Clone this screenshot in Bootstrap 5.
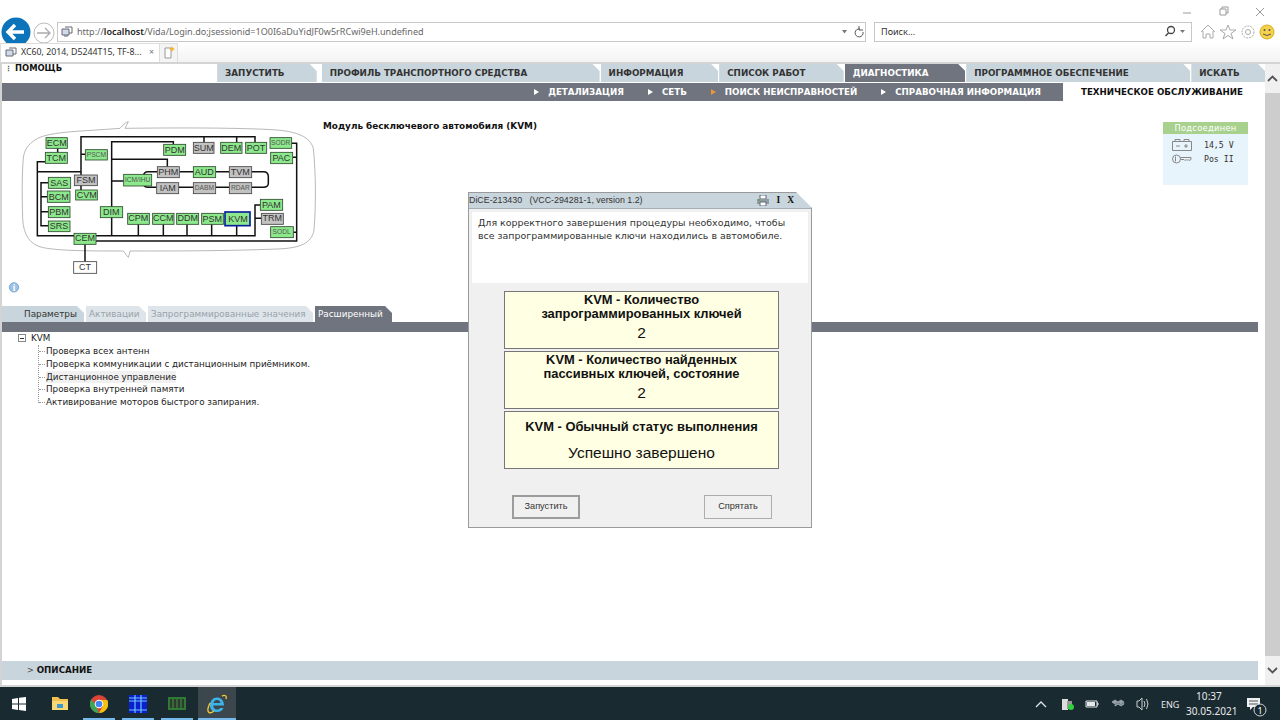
<!DOCTYPE html>
<html lang="ru"><head><meta charset="utf-8"><title>VIDA</title>
<link href="https://cdn.jsdelivr.net/npm/bootstrap@5.3.0/dist/css/bootstrap.min.css" rel="stylesheet">
<style>
html,body{margin:0;height:720px;overflow:hidden;background:#fff}
.vw{width:1280px;height:720px;position:relative;font-family:"DejaVu Sans",sans-serif;color:#222}
.chrome{height:62px;background:#fff;font-family:"Noto Sans",sans-serif}
.win-row{height:21px}
.nav-row{height:21px;padding:0 0 0 1px}
.back-svg{margin-top:-4px;margin-bottom:-7px;flex:none}
.addr{height:20px;border:1px solid #c8c8c8;font-size:9.05px;color:#666;background:#fff;white-space:nowrap}
.addr b{color:#222;font-weight:600}
.addr-main{width:809px;padding:0 0 0 3px}
.addr-fav{margin-right:4px}
.addr-search{width:318px;margin-left:8px;padding:0 3px 0 6px;color:#333}
.tab-row{height:20px;background:linear-gradient(#fff,#f3f3f3)}
.ie-tab{width:160px;height:19px;border:1px solid #ddd;border-bottom:0;background:#fff;font-size:8.8px;padding:0 5px 0 4px;color:#333;white-space:nowrap}
.ie-new{width:18px;height:19px;border:1px solid #ddd;border-left:0;border-bottom:0;background:#f4f4f4}
.app{height:625px;border-top:2px solid #d4d4d4;border-left:2px solid #d4d4d4;border-bottom:2px solid #d4d4d4}
.mainpane{width:1263px}
.topbar{height:19px;background:#fff}
.help{width:216px;font-size:8.4px;font-weight:700;color:#111;line-height:9px;padding-left:3px}
.dots{font-size:7px;margin-right:3px;color:#555}
.mtab{background:#c9d5dc;height:18px;line-height:19px;font-size:8.75px;font-weight:700;color:#333;padding-left:8px;white-space:nowrap;clip-path:polygon(0 0,calc(100% - 7px) 0,100% 7px,100% 100%,0 100%);margin-right:1px}
.mtab-on{background:#6f747e;color:#fff}
.w1{width:100px}.w2{width:279px}.w3{width:118px}.w4{width:125px}.w5{width:121px}.w6{width:225px}.w7{width:74px;margin-right:0}
.subbar{height:18px;background:#6f747e}
.subitems{font-size:8.7px;font-weight:700;color:#fff;line-height:18px;white-space:nowrap}
.subitem{margin-right:24px}
.subitem:last-child{margin-right:22px}
.tri{display:inline-block;width:0;height:0;border-left:5px solid #fff;border-top:3.5px solid transparent;border-bottom:3.5px solid transparent;margin-right:9px}
.tri-o{border-left-color:#e8963c}
.subactive{width:202px;background:#fff;color:#111;font-weight:700;font-size:8.7px;line-height:18px;white-space:nowrap;padding-left:18px}
.topcontent{height:205px}
.diagram{width:310px;height:180px;margin:14px 0 0 8px;flex:none;overflow:visible}
.modtitle{font-size:8.9px;font-weight:700;color:#111;margin:19px 0 0 3px;width:840px;flex:none}
.connbox{width:85px;height:63px;margin:21px 0 0 0;background:#e8f4fb;flex:none}
.connhead{height:12px;line-height:12px;background:#a9d18e;color:#fff;text-align:center;font-size:8.3px;letter-spacing:.3px}
.connrow{height:14px;padding-left:9px;line-height:14px;color:#333;font-family:"DejaVu Sans Mono",monospace;font-size:8.2px}
.connrow span{margin-left:12px}
.stabs{height:16px}
.stab{height:16px;line-height:17px;font-size:8.85px;color:#9aa2a8;background:#dde5ea;padding-left:3px;white-space:nowrap;clip-path:polygon(0 0,calc(100% - 7px) 0,100% 7px,100% 100%,0 100%);margin-right:2px}
.s1{width:82px;padding-left:22px;color:#333;background:#c9d5dc}.s2{width:60px}.s3{width:165px}.s4{width:77px;background:#6f747e;color:#fff;margin-right:0}
.graybar{height:10px;background:#6f747e;width:1256px}
.treebox{font-size:8.77px;color:#222;padding:0 0 0 16px;flex:1}
.troot{height:13px;line-height:13px}
.pm{display:inline-block;width:8px;height:8px;border:1px solid #888;position:relative;vertical-align:-1px;margin-right:5px}
.pm::after{content:"";position:absolute;left:1px;right:1px;top:2.5px;height:1px;background:#333}
.tlist{margin:0 0 0 20px;padding:0;list-style:none;border-left:1px dotted #999;height:58px}
.tlist li{line-height:12.75px;height:12.75px;padding-left:7px;position:relative;white-space:nowrap}
.tlist li::before{content:"";position:absolute;left:0;top:6px;width:6px;border-top:1px dotted #999}
.thl{background:#f1f1f1;display:inline-block}
.descbar{height:19px;background:#c9d5dc;width:1256px;font-size:8.7px;font-weight:700;color:#111;line-height:18px;padding-left:25px;margin-bottom:5px}
.descbar i{font-style:normal;font-weight:400;color:#444;font-size:8px;margin-right:3px}
.sbar{width:15px;background:#f0f0f0}
.sarrow{height:29px}
.sthumb{flex:1;background:#cdcdcd}
.taskbar{height:33px;background:#1a2a31;color:#e6e9ea;font-family:"Noto Sans",sans-serif;position:relative}
.tb{width:38px;height:33px;position:relative}
.mg1{margin-left:1px}.mg2{margin-left:2px}.mg3{margin-left:3px}
.tb-run::after{content:"";position:absolute;left:3px;right:3px;bottom:0;height:2px;background:#76b9ed}
.tb-on{background:#3b474d}
.tb-on::after{left:0;right:0}
.clock{font-size:10.1px;line-height:15px;text-align:center;width:46px;margin-right:11px}
.notif{margin-right:4px}
.dlg{position:absolute;left:468px;top:192px;width:344px;height:336px;background:#f0f0f0;border:1px solid #9a9a9a;clip-path:polygon(0 0,calc(100% - 16px) 0,100% 16px,100% 100%,0 100%);font-family:"Liberation Sans",sans-serif}
.dlg-title{height:16px;background:#c9d5dc;font-size:8.85px;line-height:13px;color:#333;white-space:nowrap;border-bottom:1px solid #a5b0b6}
.dlg-tool{font-family:"Liberation Serif",serif;font-weight:700;font-size:9.5px;color:#111;margin-right:17px;gap:7px}
.dlg-msg{height:71px;margin:3px 3px 0;background:#fff;font-family:"DejaVu Sans",sans-serif;font-size:9.45px;line-height:13px;padding:4px 6px;color:#333}
.res{width:275px;height:58px;background:#ffffe3;border:1px solid #777;margin-left:35px;margin-bottom:2px;padding-top:1px;text-align:center;color:#111;font-size:12.9px;line-height:14px;font-weight:700}
.res-first{margin-top:8px}
.resn{font-weight:400;font-size:15.5px;line-height:20px;margin-top:2px}
.res-title3{margin-top:7px}
.resn3{margin-top:9px}
.vbtn{width:68px;height:24px;background:#f0f0f0;border:1px solid #adadad;font-size:9.2px;color:#333;display:flex;align-items:center;justify-content:center}
.vbtn-f{border:2px solid #9c9c9c}
.btnrow{padding:24px 39px 0 43px}
</style></head><body>
<div class="vw d-flex flex-column">
 <div class="chrome">
  <div class="win-row d-flex justify-content-end align-items-center">
   <svg width="100" height="21" viewBox="0 0 100 21"><path d="M3 13h8" stroke="#999" fill="none"/><path d="M40 9h6v6h-6zM42 9V7h6v6h-2" stroke="#999" fill="none"/><path d="M76 8l8 8M84 8l-8 8" stroke="#999" fill="none"/></svg>
  </div>
  <div class="nav-row d-flex align-items-center">
   <svg width="56" height="32" viewBox="0 0 56 32" class="back-svg"><circle cx="15" cy="15" r="14.500" fill="#0e74b9"/><path d="M7 15h16M14 8l-7 7 7 7" stroke="#fff" stroke-width="3.400" fill="none"/><circle cx="43" cy="16" r="10" fill="#fff" stroke="#bbb"/><path d="M36 16h13M44 11l5 5-5 5" stroke="#aaa" stroke-width="1.300" fill="none"/></svg>
   <div class="addr addr-main d-flex align-items-center">
    <svg width="12" height="12" viewBox="0 0 12 12" class="addr-fav"><path d="M1 3h7v6H1z" fill="#cfdbe6" stroke="#667"/><path d="M4 1h7v6H8" fill="none" stroke="#667"/><path d="M3 10h4" stroke="#667"/></svg>
    <span>http://<b>localhost</b>/Vida/Login.do;jsessionid=1O0I6aDuYidJF0w5rRCwi9eH.undefined</span>
    <svg width="24" height="12" viewBox="0 0 24 12" class="ms-auto"><path d="M1 4h5L3.500 7.500z" fill="#777"/><path d="M19 3a4 4 0 1 0 3 3M18 0v4h4" stroke="#555" fill="none"/></svg>
   </div>
   <div class="addr addr-search d-flex align-items-center"><span>Поиск...</span>
    <svg width="24" height="13" viewBox="0 0 24 13" class="ms-auto"><circle cx="7" cy="5" r="3.500" fill="none" stroke="#444" stroke-width="1.300"/><path d="M4.500 8l-3 3" stroke="#444" stroke-width="1.500"/><path d="M16 5h5l-2.500 3z" fill="#777"/></svg>
   </div>
   <svg width="88" height="20" viewBox="0 0 88 20"><path d="M9 10l7-7 7 7M11 9v7h3v-4h4v4h3V9" fill="none" stroke="#aaa"/><path d="M36 3l2 5h6l-5 3.500 2 5.500-5-3.500-5 3.500 2-5.500-5-3.500h6z" fill="none" stroke="#aaa"/><circle cx="56" cy="10" r="6" fill="none" stroke="#aaa" stroke-dasharray="2 1"/><circle cx="56" cy="10" r="2.500" fill="none" stroke="#aaa"/><circle cx="75" cy="10" r="7" fill="#f4d24b" stroke="#d9ab20"/><circle cx="72.500" cy="8" r="1" fill="#555"/><circle cx="77.500" cy="8" r="1" fill="#555"/><path d="M71 12q4 3 8 0" fill="none" stroke="#555"/></svg>
  </div>
  <div class="tab-row d-flex align-items-end">
   <div class="ie-tab d-flex align-items-center"><svg width="12" height="12" viewBox="0 0 12 12" class="me-1"><path d="M1 3h7v6H1z" fill="#cfdbe6" stroke="#667"/><path d="M4 1h7v6H8" fill="none" stroke="#667"/></svg><span>XC60, 2014, D5244T15, TF-8...</span><span class="ms-auto text-secondary">×</span></div>
   <div class="ie-new d-flex align-items-center justify-content-center"><svg width="12" height="14" viewBox="0 0 12 14"><path d="M2 2h6v10H2z" fill="#fff" stroke="#999"/><path d="M9 0l1 2 2 1-2 1-1 2-1-2-2-1 2-1z" fill="#f0b429"/></svg></div>
  </div>
 </div>

 <div class="app d-flex">
  <div class="mainpane d-flex flex-column">
   <div class="topbar d-flex">
    <div class="help"><span class="dots">⋮</span>ПОМОЩЬ</div>
    <div class="mtab w1">ЗАПУСТИТЬ</div><div class="mtab w2 ms-1">ПРОФИЛЬ ТРАНСПОРТНОГО СРЕДСТВА</div><div class="mtab w3">ИНФОРМАЦИЯ</div><div class="mtab w4">СПИСОК РАБОТ</div><div class="mtab mtab-on w5">ДИАГНОСТИКА</div><div class="mtab w6">ПРОГРАММНОЕ ОБЕСПЕЧЕНИЕ</div><div class="mtab w7">ИСКАТЬ</div>
   </div>
   <div class="subbar d-flex">
    <div class="subitems flex-grow-1 d-flex justify-content-end">
     <span class="subitem"><i class="tri"></i>ДЕТАЛИЗАЦИЯ</span><span class="subitem"><i class="tri"></i>СЕТЬ</span><span class="subitem"><i class="tri tri-o"></i>ПОИСК НЕИСПРАВНОСТЕЙ</span><span class="subitem"><i class="tri"></i>СПРАВОЧНАЯ ИНФОРМАЦИЯ</span>
    </div>
    <div class="subactive">ТЕХНИЧЕСКОЕ ОБСЛУЖИВАНИЕ</div>
   </div>
   <div class="topcontent d-flex">
    <svg class="diagram" viewBox="0 0 930 540" font-family="Liberation Sans, sans-serif" text-anchor="middle">
     <path d="M75 75C110 50 200 50 330 40C340 30 345 22 355 20L345 40C500 38 700 38 800 45C860 50 900 65 910 100C918 180 918 270 912 345C905 385 870 400 800 402C650 408 500 408 360 408C358 415 358 422 355 427C348 420 345 414 340 408C250 408 150 408 100 398C60 390 40 360 38 310C36 240 36 170 40 130C42 105 55 88 75 75Z" fill="none" stroke="#888" stroke-width="1.800"/>
     <g fill="none" stroke="#111" stroke-width="4.500">
      <path d="M143 100V112M106 140H82V362H735V270H751M82 170H213V65H735V82M582 65V82M680 65V82M213 118H226M213 170V225"/>
      <path d="M305 362V80H490V88M305 133H472V155M305 198H341"/>
      <path d="M115 203H93V332H115M93 245H112M93 290H115"/>
      <path d="M225 388V440M258 378H860V85H845M848 127H860M850 352H860M735 310H754"/>
      <path d="M385 328V362M460 328V362M531 328V362M605 328V362M680 332V362"/>
      <path d="M442 170H415Q400 170 400 185V205Q400 217 415 217H440M508 170H550M617 170H658M725 170H760Q775 170 775 185V205Q775 217 760 217H725M506 217H550M617 217H658"/>
     </g>
     <g stroke="#2e4a2e" stroke-width="2.500" fill="#8be88b">
      <rect x="108" y="68" width="64" height="32"/><rect x="106" y="112" width="66" height="33"/><rect x="226" y="104" width="66" height="31"/><rect x="115" y="187" width="67" height="33"/><rect x="112" y="228" width="68" height="34"/><rect x="115" y="275" width="65" height="33"/><rect x="115" y="318" width="65" height="32"/><rect x="197" y="225" width="65" height="30"/><rect x="271" y="275" width="67" height="33"/><rect x="192" y="355" width="66" height="33"/><rect x="461" y="88" width="66" height="33"/><rect x="632" y="82" width="64" height="33"/><rect x="707" y="82" width="63" height="33"/><rect x="780" y="68" width="65" height="32"/><rect x="782" y="112" width="66" height="34"/><rect x="341" y="178" width="84" height="35"/><rect x="550" y="155" width="67" height="33"/><rect x="353" y="295" width="65" height="33"/><rect x="428" y="295" width="64" height="33"/><rect x="500" y="295" width="66" height="33"/><rect x="575" y="295" width="65" height="33"/><rect x="751" y="253" width="67" height="33"/><rect x="782" y="335" width="68" height="33"/>
     </g>
     <rect x="645" y="291" width="75" height="41" fill="#8be88b" stroke="#0a1f9c" stroke-width="5"/>
     <g stroke="#444" stroke-width="2.500" fill="#c2c2c2">
      <rect x="193" y="180" width="69" height="32"/><rect x="550" y="82" width="62" height="33"/><rect x="442" y="155" width="66" height="33"/><rect x="658" y="155" width="67" height="33"/><rect x="440" y="203" width="66" height="33"/><rect x="550" y="203" width="67" height="33"/><rect x="658" y="203" width="67" height="33"/><rect x="754" y="295" width="66" height="33"/>
     </g>
     <rect x="191" y="440" width="69" height="35" fill="#fff" stroke="#444" stroke-width="2.500"/>
     <g font-size="27" fill="#333">
      <text x="140" y="93">ECM</text><text x="139" y="137">TCM</text><text x="148" y="212">SAS</text><text x="146" y="254">BCM</text><text x="147" y="300">PBM</text><text x="147" y="342">SRS</text><text x="228" y="204">FSM</text><text x="230" y="249">CVM</text><text x="304" y="300">DIM</text><text x="225" y="379">CEM</text><text x="225" y="465">CT</text><text x="494" y="113">PDM</text><text x="581" y="107">SUM</text><text x="664" y="107">DEM</text><text x="738" y="107">POT</text><text x="814" y="137">PAC</text><text x="475" y="179">PHM</text><text x="583" y="179">AUD</text><text x="691" y="179">TVM</text><text x="473" y="227">IAM</text><text x="385" y="319">CPM</text><text x="460" y="319">CCM</text><text x="533" y="319">DDM</text><text x="607" y="320">PSM</text><text x="684" y="320">KVM</text><text x="784" y="278">PAM</text><text x="787" y="319">TRM</text>
     </g>
     <g font-size="20" fill="#555">
      <text x="259" y="125">PSCM</text><text x="812" y="90">SODR</text><text x="383" y="201">ICM/IHU</text><text x="583" y="224">DABM</text><text x="691" y="224">RDAR</text><text x="815" y="358">SODL</text>
     </g>
     <circle cx="12" cy="517" r="14" fill="#9cc3e6" stroke="#5a8fc0" stroke-width="2"/>
     <text x="12" y="527" font-size="28" font-weight="700" fill="#fff" font-family="Liberation Serif, serif">i</text>
    </svg>
    <div class="modtitle">Модуль бесключевого автомобиля (KVM)</div>
    <div class="connbox">
     <div class="connhead">Подсоединен</div>
     <div class="connrow d-flex align-items-center mt-1"><svg width="20" height="12" viewBox="0 0 20 12"><path d="M.5 2.500h19v9H.5zM3 2.500V.5h5v2M12 2.500V.5h5v2" fill="none" stroke="#888"/><path d="M4 7h4M12 7h4M14 5v4" stroke="#888" fill="none"/></svg><span>14,5 V</span></div>
     <div class="connrow d-flex align-items-center"><svg width="20" height="12" viewBox="0 0 20 12"><circle cx="4.500" cy="6" r="4" fill="none" stroke="#888"/><path d="M3.500 3.500v5M8.500 4.500H19v2l-2 1-1-1-1 1-1-1-1 1-1-1H8.500" fill="none" stroke="#888"/></svg><span>Pos II</span></div>
    </div>
   </div>
   <div class="stabs d-flex">
    <div class="stab s1">Параметры</div><div class="stab s2">Активации</div><div class="stab s3">Запрограммированные значения</div><div class="stab s4">Расширенный</div>
   </div>
   <div class="graybar"></div>
   <div class="treebox">
    <div class="troot"><span class="pm"></span>KVM</div>
    <ul class="tlist">
     <li>Проверка всех антенн</li>
     <li>Проверка коммуникации с дистанционным приёмником.</li>
     <li><span class="thl">Дистанционное управление</span></li>
     <li>Проверка внутренней памяти</li>
     <li>Активирование моторов быстрого запирания.</li>
    </ul>
   </div>
   <div class="descbar"><i>&gt;</i>ОПИСАНИЕ</div>
  </div>
  <div class="sbar d-flex flex-column">
   <div class="sarrow d-flex align-items-center justify-content-center"><svg width="11" height="7" viewBox="0 0 11 7"><path d="M1 6l4.500-4.500L10 6" fill="none" stroke="#555" stroke-width="1.800"/></svg></div>
   <div class="sthumb"></div>
   <div class="sarrow d-flex align-items-center justify-content-center"><svg width="11" height="7" viewBox="0 0 11 7"><path d="M1 1l4.500 4.500L10 1" fill="none" stroke="#555" stroke-width="1.800"/></svg></div>
  </div>
 </div>

 <div class="taskbar d-flex align-items-center">
  <div class="tb d-flex align-items-center justify-content-center"><svg width="14" height="14" viewBox="0 0 14 14"><path d="M0 2l6-1v5.500H0zM7 .8L14 0v6.500H7zM0 7.500h6V13l-6-1zM7 7.500h7V14l-7-1z" fill="#fff"/></svg></div>
  <div class="tb mg3 d-flex align-items-center justify-content-center"><svg width="18" height="15" viewBox="0 0 18 15"><path d="M1 1h6l2 2h8v11H1z" fill="#f2c14e"/><path d="M1 5h16v9H1z" fill="#fad775"/><path d="M6 8h6v4H6z" fill="#3a97d4"/></svg></div>
  <div class="tb tb-run mg1 d-flex align-items-center justify-content-center"><svg width="18" height="18" viewBox="0 0 18 18"><circle cx="9" cy="9" r="9" fill="#db4437"/><path d="M9 5h8.300A9 9 0 0 1 9 18l4-7z" fill="#f4c20d"/><path d="M9 18A9 9 0 0 1 1.500 4L6 11z" fill="#3aa757"/><circle cx="9" cy="9" r="4.300" fill="#fff"/><circle cx="9" cy="9" r="3.300" fill="#4285f4"/></svg></div>
  <div class="tb tb-run mg1 d-flex align-items-center justify-content-center"><svg width="18" height="18" viewBox="0 0 18 18"><rect width="18" height="18" fill="#0a1fd0"/><path d="M0 3h18M0 6h18M6 0v18M12 0v18M0 15h18" stroke="#6fc6f5" stroke-width="1.200"/></svg></div>
  <div class="tb tb-run mg1 d-flex align-items-center justify-content-center"><svg width="18" height="13" viewBox="0 0 18 13"><rect width="18" height="13" fill="#2f7a35"/><rect x="2" y="2" width="14" height="9" fill="#2a3d2a"/><path d="M5 2v9M9 2v9M13 2v9" stroke="#4c8f50"/></svg></div>
  <div class="tb tb-run tb-on mg2 d-flex align-items-center justify-content-center"><svg width="20" height="20" viewBox="0 0 20 20"><path d="M3 11.500h14C17 6 13.500 3.500 10 3.500 6 3.500 3 7 3 11.500 3 16 6 18 10 18c3 0 5.500-1.500 6.500-4H13c-.7 1-1.700 1.500-3 1.500-2.500 0-3.700-2-3.700-4z M6.500 9c.3-2 1.700-3 3.500-3s3.200 1 3.500 3z" fill="#3bb4ea" fill-rule="evenodd"/><path d="M15 2c3-1.500 5 0 4 3M3 9C1 13 0 17 2 18.500c1.500.7 3.500-.3 5-1.500" fill="none" stroke="#f4c430" stroke-width="1.400"/></svg></div>
  <div class="ms-auto d-flex align-items-center">
   <svg width="152" height="33" viewBox="0 0 152 33"><path d="M2 20l5-5 5 5" fill="none" stroke="#dfe3e5" stroke-width="1.300"/><rect x="28" y="12" width="6" height="11" fill="#ddd"/><rect x="33" y="14" width="5" height="8" fill="#999"/><circle cx="37" cy="20" r="3" fill="#2fd13f"/><path d="M52 14h11v6H52zM63 16h1v2h-1" fill="none" stroke="#e6e9ea"/><rect x="53" y="15" width="8" height="4" fill="#e6e9ea"/><path d="M81 13l3 2-3 2-3-2zM87 13l3 2-3 2-3-2zM81 18l3-1.500 3 1.500 3-1.500v.5l-3 2-3-2-3 2z" fill="#97a2a7" stroke="#97a2a7"/><path d="M103 14h2l3-3v12l-3-3h-2z M110 14q2 3 0 6M112.500 12q3 5 0 10" fill="none" stroke="#c9cfd2"/><text x="127" y="21" font-size="9" fill="#e6e9ea" font-family="Noto Sans, sans-serif">ENG</text></svg>
   <div class="clock">10:37<br>30.05.2021</div>
   <svg width="33" height="33" viewBox="0 0 33 33" class="notif"><path d="M4 11h13v9h-7l-3 3v-3H4z" fill="#eef0f1"/><path d="M6 14h9M6 17h9" stroke="#555"/><circle cx="17" cy="23" r="6" fill="#1a2a31" stroke="#cfd4d6"/><text x="17" y="26.500" font-size="9" fill="#fff" text-anchor="middle" font-family="Noto Sans, sans-serif">1</text></svg>
  </div>
 </div>

 <div class="dlg d-flex flex-column">
  <div class="dlg-title d-flex align-items-center"><span>DiCE-213430&nbsp;&nbsp; (VCC-294281-1, version 1.2)</span>
   <span class="ms-auto d-flex align-items-center dlg-tool"><svg width="12" height="11" viewBox="0 0 12 11"><path d="M3 0h6v4H3z" fill="#fff" stroke="#667"/><path d="M0 4h12v5H0z" fill="#8f9aa3"/><path d="M3 7h6v4H3z" fill="#fff" stroke="#667"/><path d="M1 5h2" stroke="#3a3"/></svg><span>I</span><span>X</span></span>
  </div>
  <div class="dlg-msg">Для корректного завершения процедуры необходимо, чтобы<br>все запрограммированные ключи находились в автомобиле.</div>
  <div class="res res-first d-flex flex-column">KVM - Количество<br>запрограммированных ключей<span class="resn">2</span></div>
  <div class="res d-flex flex-column">KVM - Количество найденных<br>пассивных ключей, состояние<span class="resn">2</span></div>
  <div class="res d-flex flex-column"><span class="res-title3">KVM - Обычный статус выполнения</span><span class="resn resn3">Успешно завершено</span></div>
  <div class="btnrow d-flex justify-content-between">
   <div class="vbtn vbtn-f">Запустить</div><div class="vbtn">Спрятать</div>
  </div>
 </div>
</div>
</body></html>
